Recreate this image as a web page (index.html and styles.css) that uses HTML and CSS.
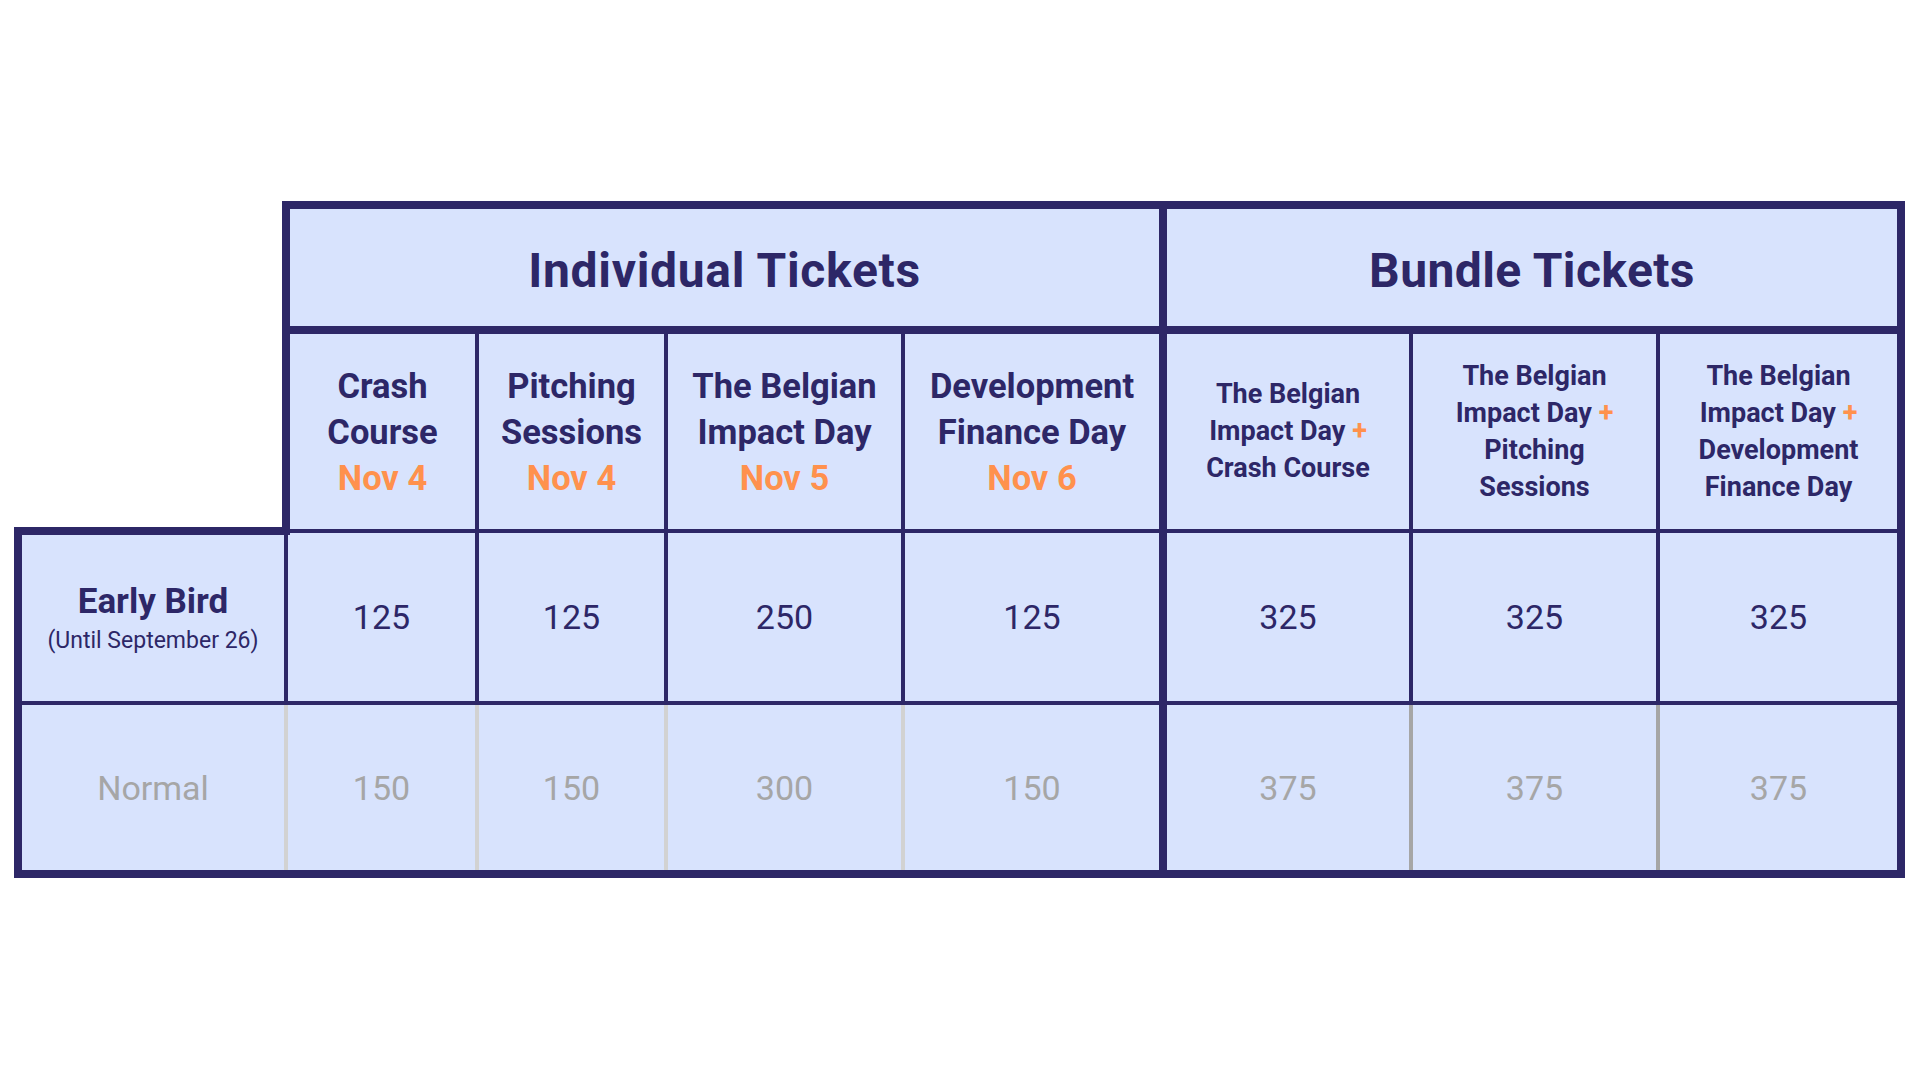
FILE: index.html
```html
<!DOCTYPE html>
<html lang="en">
<head>
<meta charset="utf-8">
<title>Tickets</title>
<link rel="stylesheet" href="styles.css">
</head>
<body>
<main class="page">
  <table class="pricing">
    <colgroup>
      <col class="w-label">
      <col class="w-1">
      <col class="w-2">
      <col class="w-3">
      <col class="w-4">
      <col class="w-5">
      <col class="w-6">
      <col class="w-7">
    </colgroup>
    <tr class="row-group">
      <td class="corner" rowspan="2"></td>
      <th class="group group-ind" colspan="4">Individual Tickets</th>
      <th class="group group-bun" colspan="3">Bundle Tickets</th>
    </tr>
    <tr class="row-head">
      <th class="head first">Crash<br>Course<br><span class="date">Nov 4</span></th>
      <th class="head">Pitching<br>Sessions<br><span class="date">Nov 4</span></th>
      <th class="head">The Belgian<br>Impact Day<br><span class="date">Nov 5</span></th>
      <th class="head thick">Development<br>Finance Day<br><span class="date">Nov 6</span></th>
      <th class="bhead">The Belgian<br>Impact Day <span class="plus">+</span><br>Crash Course</th>
      <th class="bhead">The Belgian<br>Impact Day <span class="plus">+</span><br>Pitching<br>Sessions</th>
      <th class="bhead thick">The Belgian<br>Impact Day <span class="plus">+</span><br>Development<br>Finance Day</th>
    </tr>
    <tr class="row-early">
      <th class="label"><span class="label-main">Early Bird</span><span class="label-sub">(Until September 26)</span></th>
      <td>125</td>
      <td>125</td>
      <td>250</td>
      <td class="thick">125</td>
      <td>325</td>
      <td>325</td>
      <td class="thick">325</td>
    </tr>
    <tr class="row-normal">
      <th class="label">Normal</th>
      <td>150</td>
      <td>150</td>
      <td>300</td>
      <td class="thick">150</td>
      <td class="bun">375</td>
      <td class="bun">375</td>
      <td class="thick">375</td>
    </tr>
  </table>
</main>
</body>
</html>
```
FILE: styles.css
```css
html, body {
  margin: 0;
  padding: 0;
  background: #ffffff;
}

.page {
  padding: 201px 0 0 14px;
}

.pricing {
  border-collapse: collapse;
  table-layout: fixed;
  width: 1891px;
  font-family: Roboto, "Noto Sans", sans-serif;
  color: #2d2767;
}

.w-label { width: 268px; }
.w-1 { width: 191px; }
.w-2 { width: 189px; }
.w-3 { width: 237px; }
.w-4 { width: 260px; }
.w-5 { width: 248px; }
.w-6 { width: 247px; }
.w-7 { width: 243px; }

.pricing th,
.pricing td {
  padding: 0;
  text-align: center;
  vertical-align: middle;
  background: #d8e3fd;
}

.pricing .corner {
  background: transparent;
  border: none;
}

/* Group header row */
.row-group { height: 125px; }

.pricing .group {
  font-size: 48px;
  line-height: 56px;
  font-weight: 700;
  letter-spacing: 0.7px;
  padding-top: 6px;
  border-top: 8px solid #2d2767;
  border-bottom: 8px solid #2d2767;
  border-right: 8px solid #2d2767;
}

.pricing .group-bun {
  letter-spacing: 0.4px;
}

.pricing .group-ind {
  border-left: 8px solid #2d2767;
}

/* Column header row */
.row-head { height: 201px; }

.head,
.bhead {
  font-weight: 700;
  border-right: 4px solid #2d2767;
  border-bottom: 4px solid #2d2767;
}

.head {
  font-size: 34.5px;
  line-height: 46px;
}

.bhead {
  font-size: 27px;
  line-height: 37px;
}

.head.first {
  border-left: 8px solid #2d2767;
}

.pricing .thick {
  border-right: 8px solid #2d2767;
}

.date,
.plus {
  color: #ff914d;
}

/* Early bird row */
.row-early { height: 172px; }

.row-early td,
.row-early th {
  font-size: 34px;
  font-weight: 400;
  border-right: 4px solid #2d2767;
  border-bottom: 4px solid #2d2767;
}

.row-early .label {
  border-left: 8px solid #2d2767;
  border-top: 8px solid #2d2767;
  padding-top: 6px;
}

.label-main {
  display: block;
  font-size: 35px;
  line-height: 40px;
  font-weight: 700;
}

.label-sub {
  display: block;
  font-size: 23px;
  line-height: 38px;
  font-weight: 400;
}

/* Normal row */
.row-normal { height: 171px; }

.row-normal td,
.row-normal th {
  font-size: 34px;
  font-weight: 400;
  color: #a6a6a6;
  border-right: 4px solid #d2d2d2;
  border-bottom: 8px solid #2d2767;
}

.row-normal .label {
  border-left: 8px solid #2d2767;
}

.row-normal .bun {
  border-right: 4px solid #a6a6a6;
}

.row-normal .thick {
  border-right: 8px solid #2d2767;
}
```
